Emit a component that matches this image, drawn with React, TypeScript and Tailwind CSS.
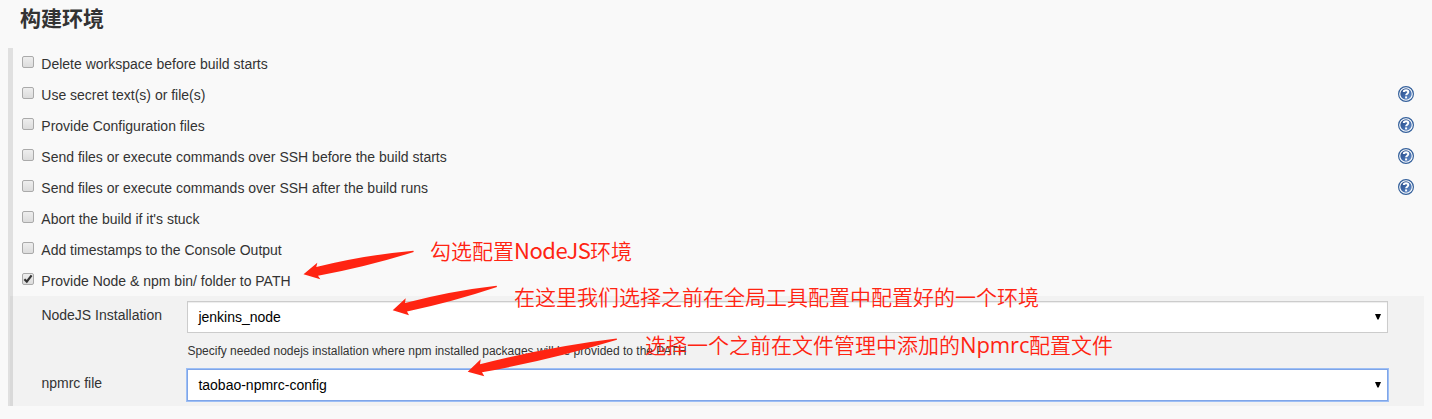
import React from "react";

const options = [
  { label: "Delete workspace before build starts", help: false, checked: false },
  { label: "Use secret text(s) or file(s)", help: true, checked: false },
  { label: "Provide Configuration files", help: true, checked: false },
  { label: "Send files or execute commands over SSH before the build starts", help: true, checked: false },
  { label: "Send files or execute commands over SSH after the build runs", help: true, checked: false },
  { label: "Abort the build if it's stuck", help: false, checked: false },
  { label: "Add timestamps to the Console Output", help: false, checked: false },
  { label: "Provide Node & npm bin/ folder to PATH", help: false, checked: true },
];

function Checkbox({ checked }: { checked: boolean }) {
  return (
    <span className="mt-2 block h-3 w-3 shrink-0 rounded-[2px] border border-[#aaa] bg-linear-to-b from-[#eee] to-[#dcdcdc]">
      {checked && (
        <svg className="block h-[10px] w-[10px]" viewBox="0 0 10 10" fill="none">
          <path d="M1.4 5.2 3.8 7.6 8.6 1.3" stroke="#333" strokeWidth="2.2" />
        </svg>
      )}
    </span>
  );
}

function HelpIcon() {
  return (
    <svg className="mt-[7px] ml-auto h-4 w-4" viewBox="0 0 16 16" fill="none">
      <defs>
        <linearGradient id="help" x1="0" y1="0" x2="1" y2="1">
          <stop offset="0" stopColor="#2c4d86" />
          <stop offset="0.5" stopColor="#3f68a8" />
          <stop offset="1" stopColor="#6f97cf" />
        </linearGradient>
      </defs>
      <circle cx="8" cy="8" r="7.4" fill="#fff" stroke="#34609b" strokeWidth="1.2" />
      <circle cx="8" cy="8" r="5.7" fill="url(#help)" />
      <path d="M5.8 6C5.8 3.5 10.3 3.5 10.3 6 10.3 7.7 8.1 7.7 8.1 9.3" stroke="#fff" strokeWidth="2" />
      <path d="M7.1 10.4h2v2h-2z" fill="#fff" />
    </svg>
  );
}

function Select({ value, focused }: { value: string; focused?: boolean }) {
  return (
    <div
      className={
        focused
          ? "flex h-8 w-[1201px] items-center justify-between border border-[#7fa5e8] bg-white pr-[6px] pl-[10px] shadow-[0_0_0_1px_#9dbff5]"
          : "flex h-8 w-[1201px] items-center justify-between border border-[#ccc] bg-white pr-[6px] pl-[10px] shadow-[inset_0_1px_1px_rgba(0,0,0,0.075)]"
      }
    >
      <span className="pl-[0.4px] text-[14px] leading-5 text-black">{value}</span>
      <svg className="h-[6px] w-[6px]" viewBox="0 0 6 6">
        <path d="M0 0h6L3.6 5.6H2.4z" fill="#000" />
      </svg>
    </div>
  );
}

export default function App() {
  return (
    <main className="relative h-[419px] w-[1432px] overflow-hidden bg-[#f9f9f9] font-['Liberation_Sans','Noto_Sans_CJK_SC',sans-serif] text-[14px] text-[#333]">
      <h1 className="flex h-12 items-start pt-[2px] pl-5 font-['Noto_Sans_CJK_SC',sans-serif] text-[21px] leading-[30px] font-bold">构建环境</h1>
      <section className="ml-2 flex h-[358px] w-[1416px]">
        <div className="flex w-[5px] shrink-0 flex-col bg-[#e0e0e0]">
          <div className="mt-auto ml-[2px] h-[110px] bg-[#d9d9d9]" />
        </div>
        <div className="flex flex-1 flex-col">
          <div className="flex h-[248px] flex-col">
            {options.map((o) => (
              <div key={o.label} className="flex h-[31px] items-start pr-[10px] pl-[9px]">
                <Checkbox checked={o.checked} />
                <span className="pt-[6px] pl-[7.3px] leading-5 whitespace-nowrap">{o.label}</span>
                {o.help && <HelpIcon />}
              </div>
            ))}
          </div>
          <div className="flex h-[110px] flex-col bg-[#f2f2f2] pt-[5px] pl-7">
            <div className="flex">
              <span className="w-[146px] pt-1 pl-[0.4px] leading-5">NodeJS Installation</span>
              <Select value="jenkins_node" />
            </div>
            <p className="ml-[146px] flex h-9 items-center pl-[0.4px] text-[12px] leading-4">Specify needed nodejs installation where npm installed packages will be provided to the PATH</p>
            <div className="flex">
              <span className="w-[146px] pt-1 pl-[0.4px] leading-5">npmrc file</span>
              <Select value="taobao-npmrc-config" focused />
            </div>
          </div>
        </div>
      </section>
      <svg className="pointer-events-none absolute inset-0 h-full w-full" fill="#ff2412">
        <path d="M303.5 274.3 317.3 262.7 316.3 267 Q365 255 413.4 250.7 L413.7 252 Q366 267 318 275.7 L320.3 279.3Z" />
        <path d="M392.7 310.3 405.7 298.3 405 303 Q450 291 496.6 285.7 L497 287 Q452 302 407 311.5 L409 315.3Z" />
        <path d="M467.7 371.7 480.7 359.3 480 364.3 Q549 346.5 616.7 338.4 L617 339.7 Q550 360 482 372.3 L484.3 376.3Z" />
      </svg>
      <p className="absolute top-[235px] left-[430px] font-['Noto_Sans_CJK_SC',sans-serif] text-[21px] leading-[30px] font-[350] whitespace-nowrap text-[#ff2412]">
        勾选配置<span className="inline-block w-[76px] text-[22px] leading-[22px] font-normal tracking-[-0.5px]">NodeJS</span>环境
      </p>
      <p className="absolute top-[281px] left-[514px] font-['Noto_Sans_CJK_SC',sans-serif] text-[21px] leading-[30px] font-[350] whitespace-nowrap text-[#ff2412]">在这里我们选择之前在全局工具配置中配置好的一个环境</p>
      <p className="absolute top-[329px] left-[645px] font-['Noto_Sans_CJK_SC',sans-serif] text-[21px] leading-[30px] font-[350] whitespace-nowrap text-[#ff2412]">
        选择一个之前在文件管理中添加的<span className="inline-block w-[69px] font-['Open_Sans'] text-[22px] leading-[22px] font-normal tracking-[-0.1px]">Npmrc</span>配置文件
      </p>
    </main>
  );
}
